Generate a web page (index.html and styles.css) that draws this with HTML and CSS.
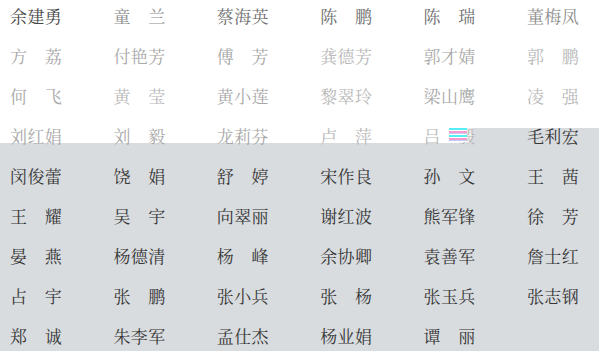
FILE: index.html
```html
<!DOCTYPE html>
<html lang="zh-CN">
<head>
<meta charset="utf-8">
<title>名单</title>
<link rel="stylesheet" href="styles.css">
</head>
<body>
<div class="sheet">
  <div class="grid">
    <span class="n c1">余建勇</span>
    <span class="n c3">童　兰</span>
    <span class="n c2">蔡海英</span>
    <span class="n c2">陈　鹏</span>
    <span class="n c2">陈　瑞</span>
    <span class="n c3">董梅凤</span>

    <span class="n c4">方　荔</span>
    <span class="n c4">付艳芳</span>
    <span class="n c4">傅　芳</span>
    <span class="n c5">龚德芳</span>
    <span class="n c4">郭才婧</span>
    <span class="n c5">郭　鹏</span>

    <span class="n c4">何　飞</span>
    <span class="n c5">黄　莹</span>
    <span class="n c4">黄小莲</span>
    <span class="n c5">黎翠玲</span>
    <span class="n c4">梁山鹰</span>
    <span class="n c5">凌　强</span>

    <span class="n c4">刘红娟</span>
    <span class="n c4">刘　毅</span>
    <span class="n c4">龙莉芬</span>
    <span class="n c5">卢　萍</span>
    <span class="n c5 glitched">吕　毅<span class="glitch"></span></span>
    <span class="n c0">毛利宏</span>

    <span class="n c0">闵俊蕾</span>
    <span class="n c0">饶　娟</span>
    <span class="n c0">舒　婷</span>
    <span class="n c0">宋作良</span>
    <span class="n c0">孙　文</span>
    <span class="n c0">王　茜</span>

    <span class="n c0">王　耀</span>
    <span class="n c0">吴　宇</span>
    <span class="n c0">向翠丽</span>
    <span class="n c0">谢红波</span>
    <span class="n c0">熊军锋</span>
    <span class="n c0">徐　芳</span>

    <span class="n c0">晏　燕</span>
    <span class="n c0">杨德清</span>
    <span class="n c0">杨　峰</span>
    <span class="n c0">余协卿</span>
    <span class="n c0">袁善军</span>
    <span class="n c0">詹士红</span>

    <span class="n c0">占　宇</span>
    <span class="n c0">张　鹏</span>
    <span class="n c0">张小兵</span>
    <span class="n c0">张　杨</span>
    <span class="n c0">张玉兵</span>
    <span class="n c0">张志钢</span>

    <span class="n c0">郑　诚</span>
    <span class="n c0">朱李军</span>
    <span class="n c0">孟仕杰</span>
    <span class="n c0">杨业娟</span>
    <span class="n c0">谭　丽</span>
    <span class="n c0"></span>
  </div>
</div>
</body>
</html>
```

FILE: styles.css
```css
html, body {
  margin: 0;
  padding: 0;
}

body {
  width: 599px;
  height: 351px;
  overflow: hidden;
  background: #d9dcdf;
}

.sheet {
  height: 351px;
  background:
    linear-gradient(#d9dcdf, #d9dcdf) 472px 128px / 127px 16px no-repeat,
    linear-gradient(#ececec, #ececec) 465px 128px / 7px 15px no-repeat,
    linear-gradient(to bottom, #ffffff 0, #ffffff 143px, #d9dcdf 143px);
}

.grid {
  display: grid;
  grid-template-columns: repeat(5, 103.4px) 1fr;
  grid-auto-rows: 40px;
  padding-left: 10px;
}

.n {
  font-family: "Noto Serif CJK SC", "Noto Sans CJK SC", serif;
  font-size: 17px;
  letter-spacing: 0.4px;
  line-height: 32px;
  font-weight: 400;
  white-space: nowrap;
}

.c0 { color: #363636; }
.c1 { color: #474747; }
.c2 { color: #6e6e6e; }
.c3 { color: #8e8e8e; }
.c4 { color: #a9a9a9; }
.c5 { color: #b8b8b8; }

.glitched {
  position: relative;
}

.glitch {
  position: absolute;
  left: 25px;
  top: 7px;
  width: 18px;
  height: 15px;
  background: repeating-linear-gradient(
    to bottom,
    #ffffff 0 1px,
    #55eef5 1px 3px,
    #ffffff 3px 4px,
    #f49ad0 4px 6px,
    #c7c9f0 6px 7px
  );
}
```
